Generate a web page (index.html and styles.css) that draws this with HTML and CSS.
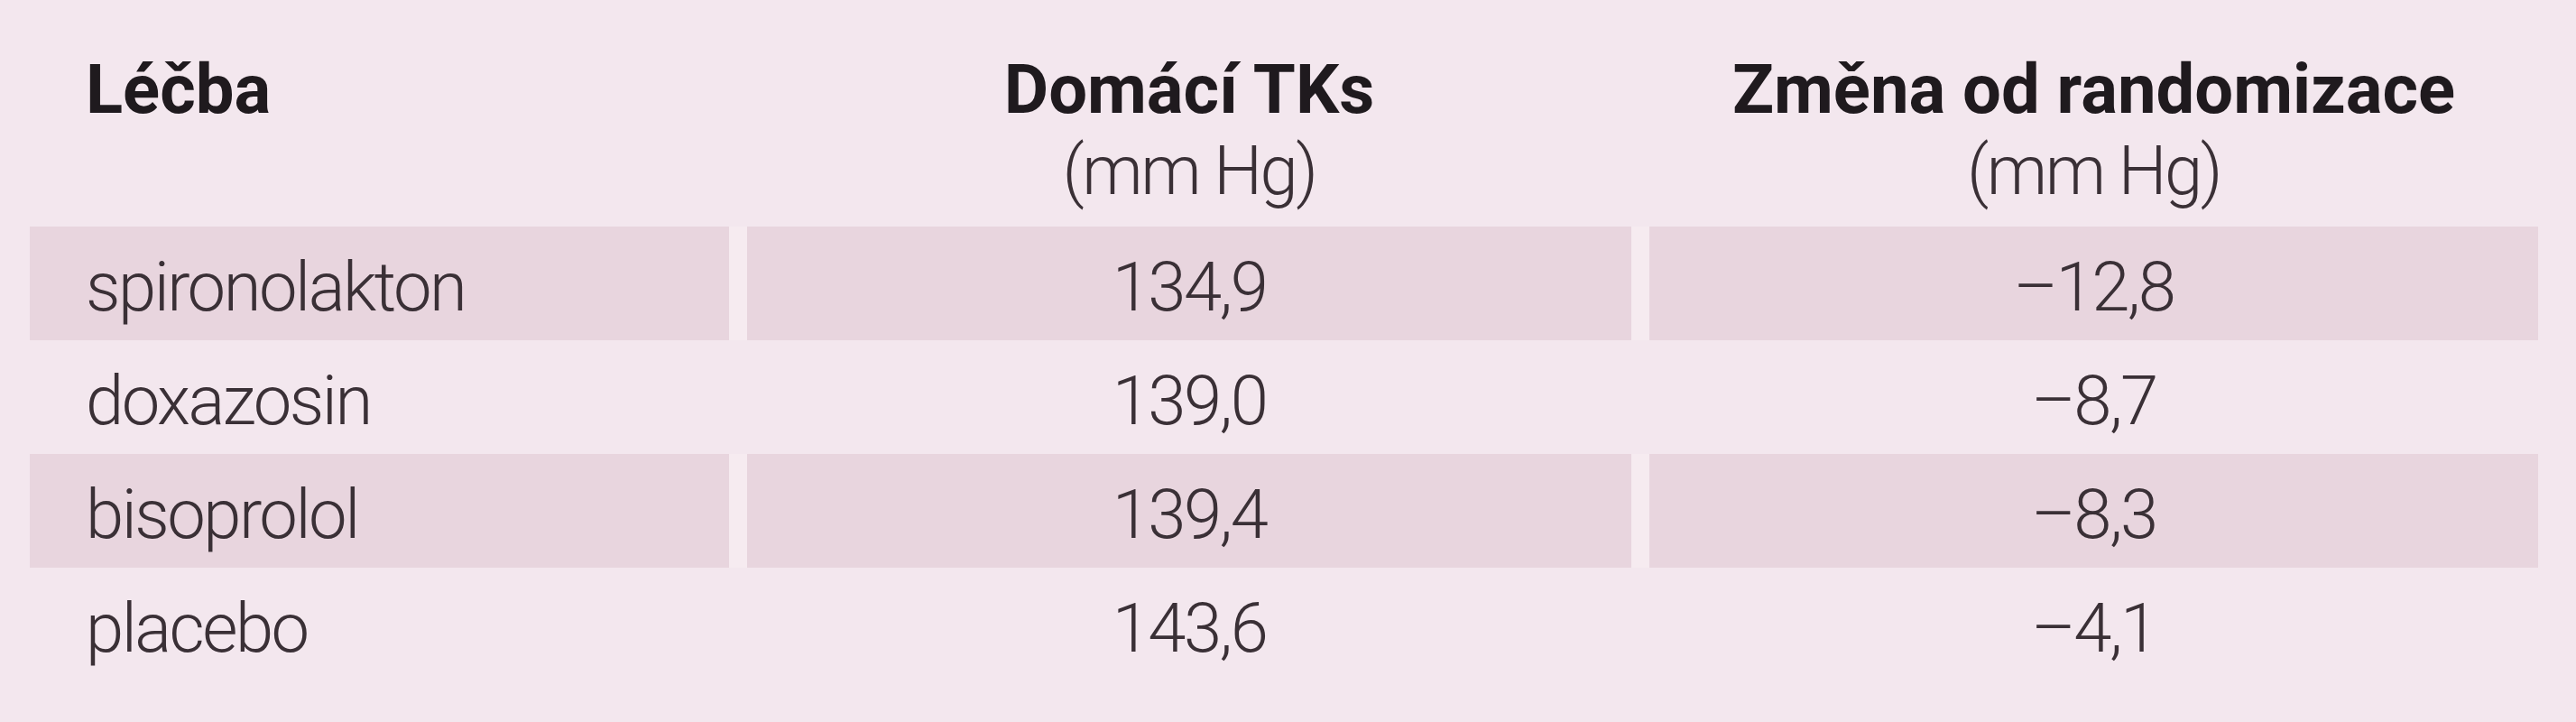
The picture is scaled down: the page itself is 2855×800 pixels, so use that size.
FILE: index.html
```html
<!DOCTYPE html>
<html lang="cs">
<head>
<meta charset="utf-8">
<title>Léčba</title>
<link rel="stylesheet" href="styles.css">
</head>
<body>
<div class="page">
  <div class="table">
    <div class="row head">
      <div class="cell left"><span class="bold">Léčba</span></div>
      <div class="cell center"><span class="bold">Domácí TKs</span><span class="unit">(mm Hg)</span></div>
      <div class="cell center"><span class="bold">Změna od randomizace</span><span class="unit">(mm Hg)</span></div>
    </div>
    <div class="row shaded">
      <div class="cell left">spironolakton</div>
      <div class="cell center">134,9</div>
      <div class="cell center">–12,8</div>
    </div>
    <div class="row">
      <div class="cell left">doxazosin</div>
      <div class="cell center">139,0</div>
      <div class="cell center">–8,7</div>
    </div>
    <div class="row shaded">
      <div class="cell left">bisoprolol</div>
      <div class="cell center">139,4</div>
      <div class="cell center">–8,3</div>
    </div>
    <div class="row">
      <div class="cell left">placebo</div>
      <div class="cell center">143,6</div>
      <div class="cell center">–4,1</div>
    </div>
  </div>
</div>
</body>
</html>
```

FILE: styles.css
```css
html, body {
  margin: 0;
  padding: 0;
  background: #f3e7ee;
}

.page {
  width: 2855px;
  height: 800px;
  padding-left: 33px;
  box-sizing: border-box;
  font-family: Roboto, "Open Sans", "Liberation Sans", sans-serif;
  font-weight: 300;
  font-size: 76px;
  letter-spacing: -2.5px;
  color: #3a3036;
}

.table {
  display: flex;
  flex-direction: column;
  width: 2780px;
}

.row {
  display: grid;
  grid-template-columns: 775px 980px 985px;
  column-gap: 20px;
  height: 126px;
}

.row.head {
  height: 251px;
  box-sizing: border-box;
  padding-top: 54px;
}

.row.shaded {
  background: #f6ebf0;
}

.row.shaded .cell {
  background: #e8d5de;
}

.cell {
  display: flex;
  align-items: center;
  line-height: 90px;
  box-sizing: border-box;
  padding-top: 7px;
}

.head .cell {
  flex-direction: column;
  align-items: flex-start;
  padding-top: 0;
}

.head .cell span {
  display: block;
  height: 90px;
}

.cell.left {
  padding-left: 62px;
}

.cell.center {
  justify-content: center;
}

.head .cell.center {
  align-items: center;
  justify-content: flex-start;
}

.bold {
  font-weight: 700;
  letter-spacing: 0;
  color: #1f1a1e;
}

.unit {
  font-weight: 300;
  color: #3a3036;
}
```
